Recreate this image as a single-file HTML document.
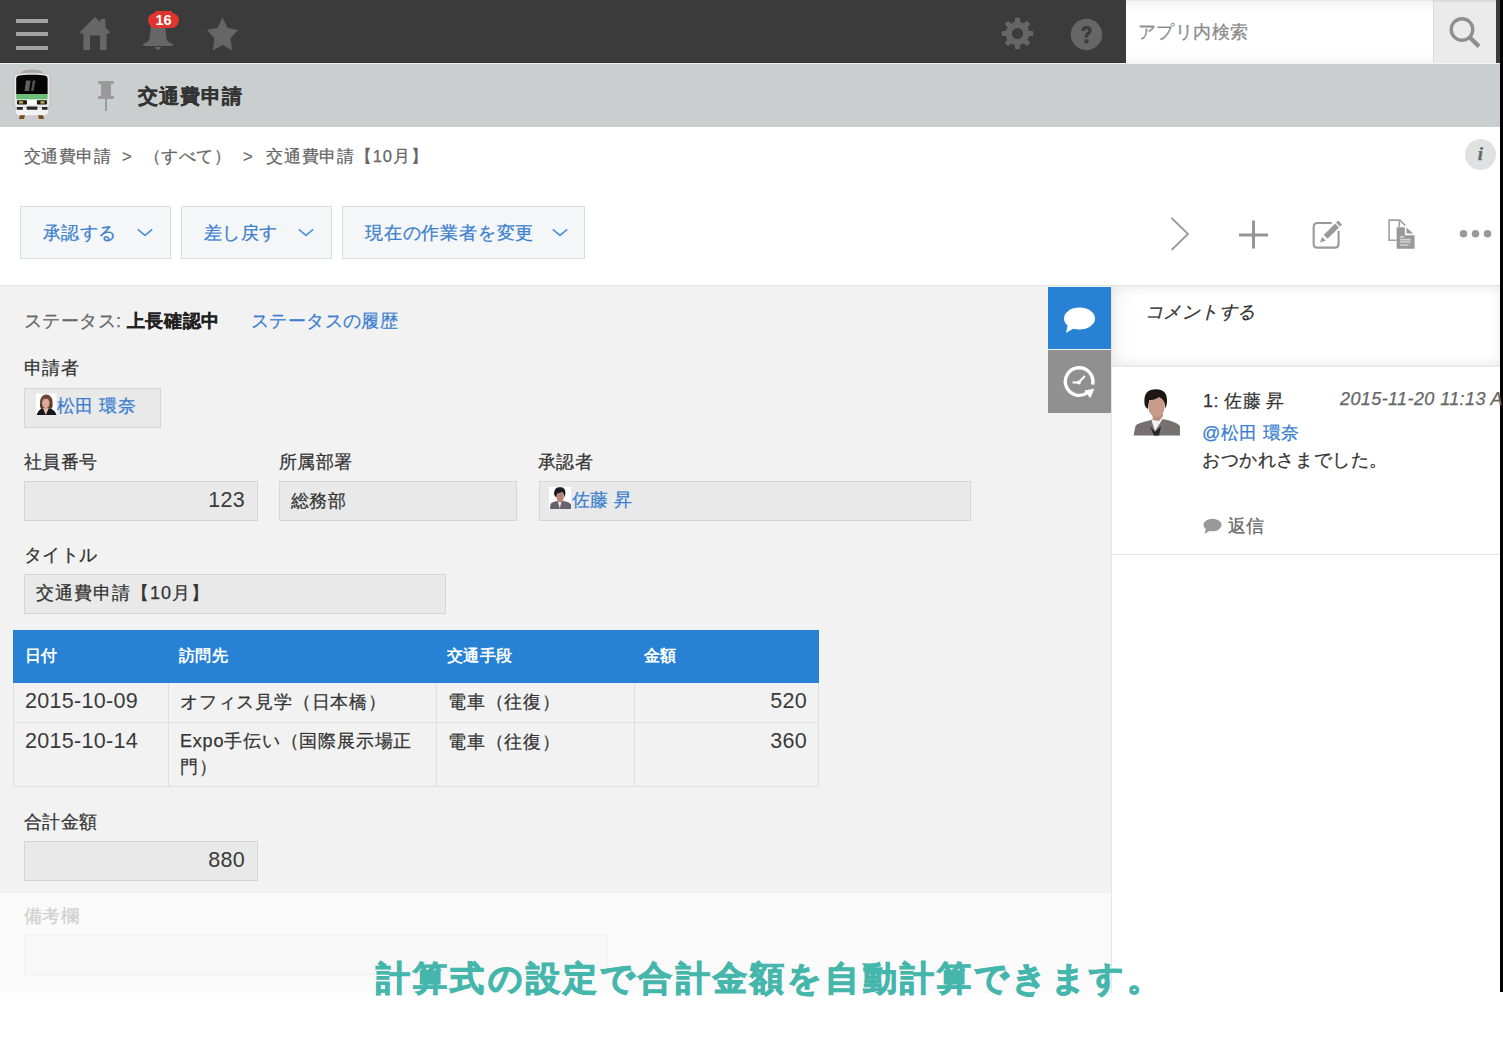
<!DOCTYPE html>
<html><head><meta charset="utf-8">
<style>
*{margin:0;padding:0;box-sizing:border-box}
html,body{width:1503px;height:1061px;overflow:hidden;background:#fff;font-family:"Liberation Sans",sans-serif;color:#333}
.a{position:absolute;white-space:nowrap}
.t{line-height:1;-webkit-text-stroke:0.25px currentColor;letter-spacing:0.4px}
</style></head><body>
<!-- top bar -->
<div class="a" style="left:0;top:0;width:1500px;height:63px;background:#3b3b3b"></div>
<div class="a" style="left:0;top:62px;width:1500px;height:1px;background:#333"></div>
<div class="a" style="left:1500px;top:0;width:3px;height:992px;background:#000"></div>
<!-- hamburger -->
<div class="a" style="left:16px;top:19px;width:32px;height:4px;background:#a3a3a3"></div>
<div class="a" style="left:16px;top:32px;width:32px;height:4px;background:#a3a3a3"></div>
<div class="a" style="left:16px;top:46px;width:32px;height:4px;background:#a3a3a3"></div>
<!-- home -->
<svg class="a" style="left:78px;top:15px" width="34" height="37" viewBox="0 0 34 37">
<path fill="#666" d="M17 2 L22.5 7.5 V4 H27.4 V12.4 L31.7 16.7 V18.5 H28.6 V35 H22 V20.5 H12 V35 H5.4 V18.5 H2.3 V16.7 Z"/>
</svg>
<!-- bell -->
<svg class="a" style="left:142px;top:12px" width="32" height="40" viewBox="0 0 32 40">
<path fill="#666" d="M9 14 C9 10 11 8 16 8 C21 8 23 10 23 14 L24.5 26 C25 29 27 30.5 30 31.5 C31.5 32.3 31.3 34 29.5 34 H2.5 C0.7 34 0.5 32.3 2 31.5 C5 30.5 7 29 7.5 26 Z"/>
<path fill="#666" d="M13 35 H19 C19 38.5 13 38.5 13 35 Z"/>
</svg>
<svg class="a" style="left:148px;top:11px" width="31" height="18" viewBox="0 0 31 18">
<rect x="0" y="2" width="31" height="15" rx="7.5" fill="#e0352f"/>
<rect x="7" y="0" width="17" height="6" fill="#e0352f"/>
</svg>
<div class="a t" style="left:148px;top:12px;width:31px;text-align:center;font-size:14.5px;font-weight:bold;color:#fff;line-height:16px;-webkit-text-stroke:0;letter-spacing:0">16</div>
<!-- star -->
<svg class="a" style="left:206px;top:17px" width="33" height="35" viewBox="0 0 33 35">
<path fill="#666" stroke="#666" stroke-width="0.8" stroke-linejoin="round" d="M16.50 1.13 L21.20 11.35 L31.34 13.20 L24.11 21.37 L25.67 32.74 L16.50 27.56 L7.33 32.74 L8.89 21.37 L1.66 13.20 L11.80 11.35 Z"/>
</svg>
<!-- gear -->
<svg class="a" style="left:1001px;top:17px" width="33" height="33" viewBox="-16.5 -16.5 33 33">
<g fill="#666">
<circle r="11.8"/>
<rect x="-2.6" y="-15.8" width="5.2" height="31.6" rx="1.3"/>
<rect x="-2.6" y="-15.8" width="5.2" height="31.6" rx="1.3" transform="rotate(45)"/>
<rect x="-2.6" y="-15.8" width="5.2" height="31.6" rx="1.3" transform="rotate(90)"/>
<rect x="-2.6" y="-15.8" width="5.2" height="31.6" rx="1.3" transform="rotate(135)"/>
</g>
<circle r="5.6" fill="#3b3b3b"/>
</svg>
<!-- help -->
<svg class="a" style="left:1070px;top:18px" width="33" height="33" viewBox="0 0 33 33">
<circle cx="16.5" cy="16.5" r="15.7" fill="#666"/>
<path d="M11.3 13 C11.3 9.5 13.5 8 16.5 8 C19.8 8 21.8 9.8 21.8 12.5 C21.8 15.5 18.2 16.2 18.2 18.8 V19.5 H14.8 V18.3 C14.8 14.8 18.3 14.5 18.3 12.6 C18.3 11.4 17.6 10.9 16.5 10.9 C15.3 10.9 14.6 11.7 14.6 13 Z" fill="#3b3b3b"/>
<rect x="14.6" y="21.5" width="3.8" height="3.8" fill="#3b3b3b"/>
</svg>
<!-- search -->
<div class="a" style="left:1126px;top:0;width:307px;height:63px;background:linear-gradient(#e6e6e6 0,#f5f5f5 2px,#fff 12px,#fff 52px,#f7f7f7 63px)"></div>
<div class="a t" style="left:1138px;top:22px;font-size:18px;color:#8a8a8a;line-height:20px">アプリ内検索</div>
<div class="a" style="left:1433px;top:0;width:63px;height:63px;background:#ebebeb;border-left:1px solid #d9dcdd;border-top:2px solid #dcdcdc"></div>
<svg class="a" style="left:1446px;top:15px" width="38" height="38" viewBox="0 0 38 38">
<circle cx="16" cy="14.5" r="10.8" fill="none" stroke="#8f8f8f" stroke-width="3.4"/>
<path d="M23.5 22 L33 31.5" stroke="#8f8f8f" stroke-width="4.5" stroke-linecap="butt"/>
</svg>
<div class="a" style="left:1496px;top:0;width:4px;height:63px;background:#3b3b3b"></div>

<!-- app header -->
<div class="a" style="left:0;top:63px;width:1500px;height:1px;background:#f2f2f2"></div>
<div class="a" style="left:0;top:64px;width:1500px;height:63px;background:#cacecf"></div>
<!-- train -->
<svg class="a" style="left:8px;top:66px" width="48" height="58" viewBox="0 0 48 58">
<path d="M13 7.5 C14 4 18 3.5 24 3.5 C30 3.5 34 4 35 7.5 Z" fill="#aaa8a4"/>
<path d="M6 12 C6 8 9 7 24 7 C39 7 42 8 42 12 V37 C42 40 40.5 42 38 42 H10 C7.5 42 6 40 6 37 Z" fill="#e9e9e9" stroke="#b5b5b5" stroke-width="0.8"/>
<path d="M8.2 13 C8.2 9.5 11 8.8 24 8.8 C37 8.8 39.6 9.5 39.6 13 V28 H8.2 Z" fill="#050505"/>
<path d="M16.5 25 L18 14.5 H22.5 L21 25 Z" fill="#777" opacity="0.8"/>
<path d="M23 25 L24.8 14.5 H27.5 L25.5 25 Z" fill="#666" opacity="0.8"/>
<rect x="8.2" y="28" width="31.4" height="5.4" fill="#6ebd76"/>
<rect x="8.2" y="33.4" width="31.4" height="1" fill="#cfe8cf"/>
<rect x="9" y="34.3" width="10" height="4.2" rx="1" fill="#1a1a1a"/>
<rect x="28.7" y="34.3" width="10.3" height="4.2" rx="1" fill="#1a1a1a"/>
<rect x="11" y="35.2" width="4" height="2.4" fill="#b8b040"/>
<rect x="32.5" y="35.2" width="4" height="2.4" fill="#b8b040"/>
<rect x="19" y="34.3" width="9.7" height="4.2" fill="#fff"/>
<path d="M8 42 H40 V46 C40 48.5 38 49.3 35 49.3 H13 C10 49.3 8 48.5 8 46 Z" fill="#f2f2f2"/>
<rect x="8.8" y="41" width="6" height="2.8" fill="#2a2a2a"/>
<rect x="18.6" y="40.5" width="10.9" height="3.2" rx="1" fill="#2a2a2a"/>
<rect x="34" y="41" width="5.5" height="2.8" fill="#2a2a2a"/>
<path d="M12 49.2 H17 L16 53 H11 Z M30 49.2 H35 L36 53 H31 Z" fill="#7a4e14"/>
</svg>
<!-- pin -->
<svg class="a" style="left:97px;top:80px" width="18" height="32" viewBox="0 0 18 32">
<g fill="#9a9a9a"><rect x="1" y="1" width="16" height="3" rx="1"/><rect x="4" y="3" width="10" height="14"/><rect x="1" y="16" width="16" height="3" rx="1"/><rect x="8" y="18" width="2" height="13"/></g>
</svg>
<div class="a t" style="left:138px;top:85px;font-size:20px;letter-spacing:1.1px;font-weight:bold;color:#333;line-height:23px;-webkit-text-stroke:0.3px #333">交通費申請</div>

<!-- breadcrumb -->
<div class="a t" style="left:24px;top:147px;font-size:16.5px;color:#666;line-height:18px">交通費申請</div>
<div class="a t" style="left:122px;top:147px;font-size:16.5px;color:#666;line-height:18px">&gt;</div>
<div class="a t" style="left:144px;top:147px;font-size:16.5px;color:#666;line-height:18px">（すべて）</div>
<div class="a t" style="left:243px;top:147px;font-size:16.5px;color:#666;line-height:18px">&gt;</div>
<div class="a t" style="left:266px;top:147px;font-size:16.5px;letter-spacing:0.8px;color:#666;line-height:18px">交通費申請【10月】</div>
<!-- info -->
<div class="a" style="left:1465px;top:139px;width:31px;height:31px;border-radius:50%;background:#dfe2e3"></div>
<div class="a t" style="left:1465px;top:144px;width:31px;text-align:center;font-family:'Liberation Serif',serif;font-style:italic;font-weight:bold;font-size:19px;color:#666;line-height:20px">i</div>

<!-- buttons -->
<div class="a" style="left:20px;top:206px;width:151px;height:53px;background:#f5f6f8;border:1px solid #d9dde0"></div>
<div class="a t" style="left:43px;top:223px;font-size:18px;color:#3a7fcf;line-height:20px">承認する</div>
<svg class="a" style="left:136px;top:226px" width="18" height="12" viewBox="0 0 18 12"><path d="M1.8 3.3 L9 9.5 L16.2 3.3" fill="none" stroke="#4f94dc" stroke-width="1.7"/></svg>
<div class="a" style="left:181px;top:206px;width:151px;height:53px;background:#f5f6f8;border:1px solid #d9dde0"></div>
<div class="a t" style="left:204px;top:223px;font-size:18px;color:#3a7fcf;line-height:20px">差し戻す</div>
<svg class="a" style="left:297px;top:226px" width="18" height="12" viewBox="0 0 18 12"><path d="M1.8 3.3 L9 9.5 L16.2 3.3" fill="none" stroke="#4f94dc" stroke-width="1.7"/></svg>
<div class="a" style="left:342px;top:206px;width:243px;height:53px;background:#f5f6f8;border:1px solid #d9dde0"></div>
<div class="a t" style="left:365px;top:223px;font-size:18px;letter-spacing:0.8px;color:#3a7fcf;line-height:20px">現在の作業者を変更</div>
<svg class="a" style="left:551px;top:226px" width="18" height="12" viewBox="0 0 18 12"><path d="M1.8 3.3 L9 9.5 L16.2 3.3" fill="none" stroke="#4f94dc" stroke-width="1.7"/></svg>

<!-- right icons -->
<svg class="a" style="left:1168px;top:215px" width="24" height="38" viewBox="0 0 24 38"><path d="M3.5 3 L20 19 L3.5 35" fill="none" stroke="#9a9a9a" stroke-width="1.8"/></svg>
<svg class="a" style="left:1238px;top:219px" width="32" height="32" viewBox="0 0 32 32"><path d="M1 16 H30 M15.5 1.5 V29.5" stroke="#959595" stroke-width="3"/></svg>
<svg class="a" style="left:1306px;top:212px" width="44" height="44" viewBox="0 0 44 44">
<path d="M25.7 11.05 H11.65 Q7.65 11.05 7.65 15.05 V31.65 Q7.65 35.65 11.65 35.65 H28.55 Q32.55 35.65 32.55 31.65 V19" fill="none" stroke="#999" stroke-width="2.1"/>
<path d="M17.76 22.96 L21.64 26.84 L33.04 15.44 L29.16 11.56 Z" fill="#999"/>
<path d="M14.1 30.5 L16 24.9 L19.9 28.6 Z" fill="#999"/>
<path d="M30.06 10.66 L33.94 14.54 L36.04 12.44 L32.16 8.56 Z" fill="#999"/>
</svg>
<svg class="a" style="left:1380px;top:212px" width="44" height="44" viewBox="0 0 44 44">
<path d="M19.5 8.1 H9.1 V28.2 H16.6" fill="none" stroke="#a0a0a0" stroke-width="1.6"/>
<path d="M19.3 8.1 V15.3 M19.5 7.6 L25.2 13.5" fill="none" stroke="#a0a0a0" stroke-width="1.6"/>
<path d="M16.6 15.3 H24.9 V23.2 H34.6 V36.7 H16.6 Z" fill="#999"/>
<path d="M26.5 15.6 L33.3 21.6 H26.5 Z" fill="#999"/>
<path d="M20 24.9 H24 M20 27.6 H30.7 M20 30 H30.7 M20 33 H28.6" stroke="#d2d2d2" stroke-width="1.6"/>
</svg>
<svg class="a" style="left:1458px;top:229px" width="36" height="10" viewBox="0 0 36 10"><g fill="#999"><circle cx="5.5" cy="4.8" r="3.8"/><circle cx="17.5" cy="4.8" r="3.8"/><circle cx="29.5" cy="4.8" r="3.8"/></g></svg>

<!-- separator -->
<div class="a" style="left:0;top:285px;width:1500px;height:1px;background:#e1e5e7"></div>
<!-- main gray -->
<div class="a" style="left:0;top:286px;width:1112px;height:607px;background:#f2f2f2"></div>
<div class="a" style="left:0;top:893px;width:1112px;height:100px;background:#fafafa"></div>

<!-- status -->
<div class="a t" style="left:24px;top:311px;font-size:18px;color:#666;line-height:20px">ステータス: <b style="color:#222;letter-spacing:0.6px">上長確認中</b></div>
<div class="a t" style="left:251px;top:311px;font-size:18px;color:#3a7fcf;line-height:20px">ステータスの履歴</div>

<!-- applicant -->
<div class="a t" style="left:24px;top:358px;font-size:18px;color:#333;line-height:20px">申請者</div>
<div class="a" style="left:24px;top:388px;width:137px;height:40px;background:#e9e9e9;border:1px solid #d6d6d6"></div>
<svg class="a" style="left:34px;top:391px" width="26" height="26" viewBox="0 0 26 26">
<rect x="2" y="2.7" width="20.5" height="21.3" fill="#fff"/>
<g filter="url(#bl)">
<ellipse cx="12.3" cy="11" rx="6.4" ry="7.6" fill="#6e4234"/>
<path d="M6 13 C6 17 7 18 8 18.5 L9 12 Z M18.6 13 C18.6 17 17.6 18 16.6 18.5 L15.6 12 Z" fill="#5a3428"/>
<ellipse cx="11.8" cy="12.2" rx="3.7" ry="5" fill="#d9aa9a"/>
<path d="M7.5 9 C8.5 5.5 15 5 16.5 9.5 C14 7.5 10 7.5 7.5 9 Z" fill="#7a4a3a"/>
<path d="M2.7 24 C3.5 20 6 18 9 17.2 L12 19 L15 17.2 C18.5 18 21.5 20 22.5 24 Z" fill="#16141c"/>
<path d="M9 17.2 L11.8 24 L14.8 17.2 Z" fill="#e6c2b2"/>
</g>
</svg>
<div class="a t" style="left:57px;top:396px;font-size:18px;color:#3a7fcf;line-height:20px">松田 環奈</div>

<!-- row fields -->
<div class="a t" style="left:24px;top:452px;font-size:18px;color:#333;line-height:20px">社員番号</div>
<div class="a" style="left:24px;top:481px;width:234px;height:40px;background:#e9e9e9;border:1px solid #d6d6d6"></div>
<div class="a t" style="left:24px;top:489px;width:221px;text-align:right;font-size:21.5px;letter-spacing:0.3px;color:#3a3a3a;-webkit-text-stroke:0;line-height:22px">123</div>
<div class="a t" style="left:279px;top:452px;font-size:18px;color:#333;line-height:20px">所属部署</div>
<div class="a" style="left:279px;top:481px;width:238px;height:40px;background:#e9e9e9;border:1px solid #d6d6d6"></div>
<div class="a t" style="left:291px;top:491px;font-size:18px;color:#333;line-height:20px">総務部</div>
<div class="a t" style="left:538px;top:452px;font-size:18px;color:#333;line-height:20px">承認者</div>
<div class="a" style="left:539px;top:481px;width:432px;height:40px;background:#e9e9e9;border:1px solid #d6d6d6"></div>
<svg class="a" style="left:547px;top:485px" width="26" height="26" viewBox="0 0 26 26">
<rect x="2" y="1.7" width="22" height="22.3" fill="#fff"/>
<g filter="url(#bl)">
<path d="M2.9 24 L3.5 19 C5 17 8 16.3 11 15.9 L13 16.5 L16 15.9 C20 16.5 23 17.5 24 19.5 V24 Z" fill="#67616a"/>
<path d="M10.8 16.5 L12.7 23.5 L14.7 16.5 Z" fill="#e8e6ec"/>
<ellipse cx="13.2" cy="12" rx="3.6" ry="5.2" fill="#b88476"/>
<path d="M7.1 9 C7 4 9.5 2.2 13 2.2 C16.5 2.2 18.6 4 18.4 8.5 C18.2 10.5 17.8 11.5 17.3 12.3 C17 9 16 7.5 14.5 7 C12.5 8 10.8 8.4 10 8.6 C9.7 10 9.6 11 9.5 12.3 C8 11.5 7.2 10.3 7.1 9 Z" fill="#1e1a1e"/>
</g>
</svg>
<div class="a t" style="left:572px;top:490px;font-size:18px;color:#3a7fcf;line-height:20px">佐藤 昇</div>

<!-- title -->
<div class="a t" style="left:24px;top:545px;font-size:18px;color:#333;line-height:20px">タイトル</div>
<div class="a" style="left:24px;top:574px;width:422px;height:40px;background:#e9e9e9;border:1px solid #d6d6d6"></div>
<div class="a t" style="left:36px;top:583px;font-size:18px;letter-spacing:1px;color:#333;line-height:20px">交通費申請【10月】</div>

<!-- table -->
<div class="a" style="left:13px;top:630px;width:806px;height:53px;background:#2782d6"></div>
<div class="a t" style="left:25px;top:647px;font-size:15.5px;font-weight:bold;color:#fff;line-height:18px;-webkit-text-stroke:0">日付</div>
<div class="a t" style="left:179px;top:647px;font-size:15.5px;font-weight:bold;color:#fff;line-height:18px;-webkit-text-stroke:0">訪問先</div>
<div class="a t" style="left:447px;top:647px;font-size:15.5px;font-weight:bold;color:#fff;line-height:18px;-webkit-text-stroke:0">交通手段</div>
<div class="a t" style="left:644px;top:647px;font-size:15.5px;font-weight:bold;color:#fff;line-height:18px;-webkit-text-stroke:0">金額</div>
<div class="a" style="left:13px;top:683px;width:806px;height:104px;border:1px solid #dde1e3;border-top:0"></div>
<div class="a" style="left:13px;top:722px;width:806px;height:1px;background:#dde1e3"></div>
<div class="a" style="left:168px;top:683px;width:1px;height:104px;background:#dde1e3"></div>
<div class="a" style="left:436px;top:683px;width:1px;height:104px;background:#dde1e3"></div>
<div class="a" style="left:634px;top:683px;width:1px;height:104px;background:#dde1e3"></div>
<div class="a t" style="left:25px;top:690px;font-size:21.5px;letter-spacing:0.3px;color:#3a3a3a;-webkit-text-stroke:0;line-height:22px">2015-10-09</div>
<div class="a t" style="left:180px;top:692px;font-size:18px;letter-spacing:0.8px;color:#333;line-height:20px">オフィス見学（日本橋）</div>
<div class="a t" style="left:448px;top:692px;font-size:18px;letter-spacing:0.8px;color:#333;line-height:20px">電車（往復）</div>
<div class="a t" style="left:634px;top:690px;width:173px;text-align:right;font-size:21.5px;letter-spacing:0.3px;color:#3a3a3a;-webkit-text-stroke:0;line-height:22px">520</div>
<div class="a t" style="left:25px;top:730px;font-size:21.5px;letter-spacing:0.3px;color:#3a3a3a;-webkit-text-stroke:0;line-height:22px">2015-10-14</div>
<div class="a t" style="left:180px;top:731px;font-size:18px;letter-spacing:0.8px;color:#333;line-height:20px">Expo手伝い（国際展示場正</div>
<div class="a t" style="left:180px;top:757px;font-size:18px;letter-spacing:0.8px;color:#333;line-height:20px">門）</div>
<div class="a t" style="left:448px;top:732px;font-size:18px;letter-spacing:0.8px;color:#333;line-height:20px">電車（往復）</div>
<div class="a t" style="left:634px;top:730px;width:173px;text-align:right;font-size:21.5px;letter-spacing:0.3px;color:#3a3a3a;-webkit-text-stroke:0;line-height:22px">360</div>

<!-- total -->
<div class="a t" style="left:24px;top:812px;font-size:18px;color:#333;line-height:20px">合計金額</div>
<div class="a" style="left:24px;top:841px;width:234px;height:40px;background:#e9e9e9;border:1px solid #d6d6d6"></div>
<div class="a t" style="left:24px;top:849px;width:221px;text-align:right;font-size:21.5px;letter-spacing:0.3px;color:#3a3a3a;-webkit-text-stroke:0;line-height:22px">880</div>

<!-- faded -->
<div class="a t" style="left:24px;top:906px;font-size:18px;color:#d0d0d0;line-height:20px">備考欄</div>
<div class="a" style="left:24px;top:934px;width:584px;height:41px;background:#f8f8f8;border:1px solid #f1f1f1"></div>

<!-- side tabs -->
<div class="a" style="left:1048px;top:287px;width:63px;height:62px;background:#2782d6"></div>
<svg class="a" style="left:1062px;top:305px" width="36" height="30" viewBox="0 0 36 30">
<ellipse cx="17.5" cy="13.5" rx="15.5" ry="11" fill="#fff"/>
<path d="M6 19 L4 28 L14 22 Z" fill="#fff"/>
</svg>
<div class="a" style="left:1048px;top:350px;width:63px;height:63px;background:#909090"></div>
<svg class="a" style="left:1062px;top:364px" width="36" height="36" viewBox="0 0 36 36">
<path d="M30.6 20.5 A13.8 13.8 0 1 0 25.5 28.5" fill="none" stroke="#fff" stroke-width="3.4"/>
<path d="M22.2 26.5 L32.3 24.7 L28.4 34.2 Z" fill="#fff"/>
<path d="M10.5 18.5 H16.8 L22.8 12" fill="none" stroke="#fff" stroke-width="2"/>
<circle cx="16.8" cy="18.5" r="2" fill="#fff"/>
</svg>

<!-- comment panel -->
<div class="a" style="left:1111px;top:286px;width:1px;height:707px;background:#e3e6e8"></div>
<div class="a" style="left:1112px;top:286px;width:388px;height:80px;background:#fff;box-shadow:inset 0 4px 10px rgba(0,0,0,0.05),inset 12px 0 14px rgba(0,0,0,0.03),inset 0 -6px 10px rgba(0,0,0,0.04)"></div>
<div class="a t" style="left:1145px;top:302px;font-size:18px;font-style:italic;color:#333;line-height:20px">コメントする</div>
<div class="a" style="left:1112px;top:366px;width:388px;height:1px;background:#e1e5e7"></div>
<svg class="a" style="left:1128px;top:384px" width="58" height="56" viewBox="0 0 58 56">
<defs><filter id="bl" x="-10%" y="-10%" width="120%" height="120%"><feGaussianBlur stdDeviation="0.6"/></filter></defs>
<g filter="url(#bl)">
<path d="M5.5 51.5 L7.5 42 C9 39.5 14 38.5 21 36.5 L29 34 L37 35.5 C44 37 49.5 39 52 42 V51.5 Z" fill="#767170"/>
<path d="M23.5 36.5 L27 47 L35 34.5 L29 33 Z" fill="#f0f0f2"/>
<path d="M22 42 L26 51.5 L31 51.5 L33 42 L27 48 Z" fill="#25232a"/>
<path d="M24 28 L25 36 L31 37 L35 32 L34 27 Z" fill="#b88c78"/>
<ellipse cx="28.5" cy="22.5" rx="8.2" ry="10.5" fill="#c69c88"/>
<path d="M16.5 20 C15.5 9 20 5.3 28 5.3 C35.5 5.3 39.5 9 39 18 C38.8 21 38 23 37.3 24.5 C37 19 36 15.5 31 13 C28 15.5 24 16 21.5 16 C20.5 19 20.2 22 19.8 25 C18 24 17 22 16.5 20 Z" fill="#1d1719"/>
</g>
</svg>
<div class="a t" style="left:1203px;top:391px;font-size:18px;color:#333;line-height:20px">1: 佐藤 昇</div>
<div class="a t" style="left:1340px;top:389px;font-size:18px;font-style:italic;color:#666;line-height:20px">2015-11-20 11:13 AM</div>
<div class="a t" style="left:1202px;top:423px;font-size:18px;color:#3a7fcf;line-height:20px">@松田 環奈</div>
<div class="a t" style="left:1202px;top:450px;font-size:18px;letter-spacing:0.6px;color:#333;line-height:20px">おつかれさまでした。</div>
<svg class="a" style="left:1202px;top:518px" width="20" height="17" viewBox="0 0 20 17">
<ellipse cx="10.5" cy="7" rx="9" ry="6.3" fill="#999"/>
<path d="M4 10.5 L2.5 16 L9 12 Z" fill="#999"/>
</svg>
<div class="a t" style="left:1228px;top:516px;font-size:18px;color:#666;line-height:20px">返信</div>
<div class="a" style="left:1112px;top:554px;width:388px;height:1px;background:#e1e5e7"></div>

<!-- caption -->
<div class="a t" style="left:376px;top:959px;font-size:34px;letter-spacing:3.2px;font-weight:bold;color:#45b6ac;-webkit-text-stroke:1.1px #45b6ac;line-height:38px">計算式の設定で合計金額を自動計算できます。</div>
</body></html>
